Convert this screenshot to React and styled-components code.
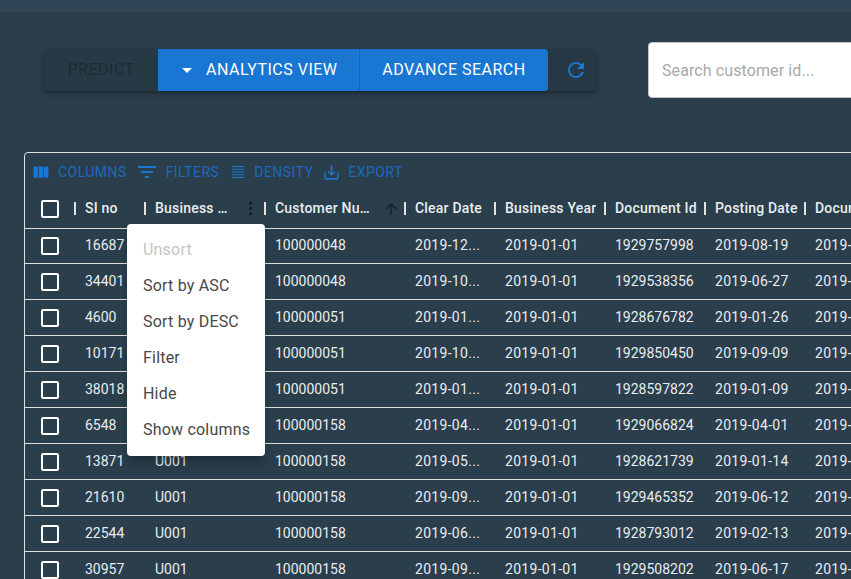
import React from 'react';
import styled, { createGlobalStyle } from 'styled-components';

const GlobalStyle = createGlobalStyle`
  html, body {
    margin: 0;
    height: 100%;
    overflow: hidden;
    background-color: #2a3e4c;
    font-family: Roboto, "Liberation Sans", Arial, sans-serif;
  }
`;

const Page = styled.div`
  width: 851px;
  height: 579px;
  overflow: hidden;
  background-color: #2a3e4c;
`;

const TopBar = styled.div`
  height: 12px;
  background-color: #2f4454;
`;

const Controls = styled.div`
  display: flex;
  align-items: center;
  margin-top: 30px;
  padding-left: 44px;
  height: 56px;
`;

const ButtonGroup = styled.div`
  display: flex;
  height: 42px;
  border-radius: 4px;
  background-color: #273945;
  box-shadow: 0 3px 3px -2px rgba(0, 0, 0, 0.2), 0 3px 4px rgba(0, 0, 0, 0.14), 0 1px 8px rgba(0, 0, 0, 0.12);
`;

const GroupButton = styled.button`
  display: flex;
  align-items: center;
  justify-content: ${(p) => (p.$center ? 'center' : 'flex-start')};
  width: ${(p) => p.$width}px;
  height: 42px;
  padding: 0;
  padding-left: ${(p) => p.$pad || 0}px;
  border: 0;
  border-right: ${(p) => (p.$divider ? '1px solid #1565c0' : '0')};
  border-radius: ${(p) => p.$radius || '0'};
  background-color: ${(p) => (p.$muted ? '#273945' : '#1976d2')};
  color: ${(p) => (p.$muted ? 'rgba(0, 0, 0, 0.26)' : '#fff')};
  font-family: Roboto, sans-serif;
  font-size: 16px;
  letter-spacing: 0.5px;
  line-height: 1;
  box-sizing: border-box;
`;

const CaretIcon = styled.svg`
  width: 24px;
  height: 24px;
  margin-right: 7px;
  fill: #fff;
`;

const RefreshIcon = styled.svg`
  width: 24px;
  height: 24px;
  fill: #1976d2;
`;

const SearchBox = styled.div`
  display: flex;
  align-items: center;
  flex: 1;
  margin-left: 52px;
  margin-right: -8px;
  height: 56px;
  padding-left: 13px;
  background-color: #fff;
  border: 1px solid #c4c4c4;
  border-radius: 4px;
  box-sizing: border-box;
  color: #a9a9a9;
  font-size: 16px;
  letter-spacing: 0.1px;
`;

const Grid = styled.div`
  width: 900px;
  margin-top: 54px;
  margin-left: 24px;
  position: relative;
  border: 1px solid #e0e0e0;
  border-radius: 4px;
  box-sizing: border-box;
`;

const Toolbar = styled.div`
  display: flex;
  align-items: center;
  height: 37px;
  padding: 1px 0 0 5px;
  box-sizing: border-box;
`;

const ToolbarItem = styled.div`
  display: flex;
  align-items: center;
  margin-right: ${(p) => p.$after}px;
  color: #1c68c0;
  font-size: 14px;
  letter-spacing: 0.45px;
`;

const ToolbarIcon = styled.svg`
  width: ${(p) => p.$size}px;
  height: ${(p) => p.$size}px;
  margin-right: ${(p) => p.$gap}px;
  fill: #1976d2;
`;

const Row = styled.div`
  display: grid;
  grid-template-columns: 50px 70px 120px 140px 90px 110px 100px 100px 120px;
  height: ${(p) => p.$height}px;
  border-bottom: 1px solid #e0e0e0;
  box-sizing: border-box;
`;

const Cell = styled.div`
  display: flex;
  align-items: center;
  padding: 0 0 ${(p) => p.$lift}px 10px;
  overflow: hidden;
  color: #e9edf0;
  font-size: 14px;
  letter-spacing: ${(p) => (p.$date ? '0.3px' : '0')};
  white-space: nowrap;
`;

const CheckCell = styled.div`
  display: flex;
  align-items: center;
  justify-content: center;
`;

const Checkbox = styled.span`
  width: 14px;
  height: 14px;
  border: 2px solid #fff;
  border-radius: 2px;
`;

const HeaderCell = styled.div`
  display: flex;
  align-items: center;
  min-width: 0;
  padding: 0 0 2px 10px;
  position: relative;
  color: #e9edf0;
  font-size: 14px;
  font-weight: 500;
  letter-spacing: 0.2px;
  white-space: nowrap;
  &::before {
    content: '';
    position: absolute;
    left: -1px;
    top: 12px;
    width: 2px;
    height: 13px;
    background-color: #e0e0e0;
  }
`;

const HeaderLabel = styled.span`
  flex: 0 1 auto;
  max-width: ${(p) => p.$max || 110}px;
  overflow: hidden;
  text-overflow: ellipsis;
`;

const MenuDots = styled.svg`
  position: absolute;
  right: 4px;
  top: 8px;
  width: 21px;
  height: 21px;
  fill: #15222c;
`;

const SortArrow = styled.svg`
  position: absolute;
  right: 5px;
  top: 10px;
  width: 18px;
  height: 18px;
  fill: #15222c;
`;

const Menu = styled.ul`
  position: absolute;
  left: 102px;
  top: 71px;
  width: 138px;
  height: 232px;
  margin: 0;
  padding: 7px 0 0;
  list-style: none;
  background-color: #fff;
  border-radius: 4px;
  box-sizing: border-box;
  box-shadow: 0 5px 5px -3px rgba(0, 0, 0, 0.2), 0 8px 10px 1px rgba(0, 0, 0, 0.14);
`;

const MenuItem = styled.li`
  display: flex;
  align-items: center;
  height: 36px;
  padding-left: 16px;
  color: ${(p) => (p.$disabled ? '#c4c4c4' : '#484848')};
  font-size: 16px;
  letter-spacing: 0.2px;
`;

const columns = [
  { label: 'SI no' },
  { label: 'Business Code', max: 75, menu: true },
  { label: 'Customer Number', max: 98, sort: true },
  { label: 'Clear Date' },
  { label: 'Business Year' },
  { label: 'Document Id' },
  { label: 'Posting Date' },
  { label: 'Document Create Date' },
];

const rows = [
  ['16687', 'U001', '100000048', '2019-12...', '2019-01-01', '1929757998', '2019-08-19'],
  ['34401', 'U001', '100000048', '2019-10...', '2019-01-01', '1929538356', '2019-06-27'],
  ['4600', 'U001', '100000051', '2019-01...', '2019-01-01', '1928676782', '2019-01-26'],
  ['10171', 'U001', '100000051', '2019-10...', '2019-01-01', '1929850450', '2019-09-09'],
  ['38018', 'U001', '100000051', '2019-01...', '2019-01-01', '1928597822', '2019-01-09'],
  ['6548', 'U001', '100000158', '2019-04...', '2019-01-01', '1929066824', '2019-04-01'],
  ['13871', 'U001', '100000158', '2019-05...', '2019-01-01', '1928621739', '2019-01-14'],
  ['21610', 'U001', '100000158', '2019-09...', '2019-01-01', '1929465352', '2019-06-12'],
  ['22544', 'U001', '100000158', '2019-06...', '2019-01-01', '1928793012', '2019-02-13'],
  ['30957', 'U001', '100000158', '2019-09...', '2019-01-01', '1929508202', '2019-06-17'],
];

const dateColumns = [3, 4, 6];

const menuItems = ['Unsort', 'Sort by ASC', 'Sort by DESC', 'Filter', 'Hide', 'Show columns'];

const toolbarItems = [
  { label: 'COLUMNS', size: 21, gap: 7, after: 8, box: '0 0 24 24', d: 'M10 18h5V5h-5v13zm-6 0h5V5H4v13zM16 5v13h5V5h-5z' },
  { label: 'FILTERS', size: 24, gap: 7, after: 13, box: '0 0 24 24', d: 'M10 18h4v-2h-4v2zM3 6v2h18V6H3zm3 7h12v-2H6v2z' },
  { label: 'DENSITY', size: 12, gap: 10, after: 9, box: '0 0 12 12', d: 'M0 0h12v1H0zM0 2.75h12v1H0zM0 5.5h12v1H0zM0 8.25h12v1H0zM0 11h12v1H0z' },
  { label: 'EXPORT', size: 19, gap: 7, after: 0, box: '0 0 24 24', d: 'M19 12v7H5v-7H3v7c0 1.1.9 2 2 2h14c1.1 0 2-.9 2-2v-7h-2zm-6 .67l2.59-2.58L17 11.5l-5 5-5-5 1.41-1.41L11 12.67V3h2z' },
];

const App = () => {
  return (
    <Page>
      <GlobalStyle />
      <TopBar />
      <Controls>
        <ButtonGroup>
          <GroupButton $muted $center $width={114} $radius="4px 0 0 4px">PREDICT</GroupButton>
          <GroupButton $width={202} $pad={17} $divider>
            <CaretIcon viewBox="0 0 24 24"><path d="M7 10l5 5 5-5z" /></CaretIcon>
            ANALYTICS VIEW
          </GroupButton>
          <GroupButton $center $width={188} $radius="0 4px 4px 0">ADVANCE SEARCH</GroupButton>
          <GroupButton $muted $center $width={48} $pad={8} $radius="0 4px 4px 0">
            <RefreshIcon viewBox="0 0 24 24">
              <path d="M17.65 6.35C16.2 4.9 14.21 4 12 4c-4.42 0-7.99 3.58-7.99 8s3.57 8 7.99 8c3.73 0 6.84-2.55 7.73-6h-2.08c-.82 2.33-3.04 4-5.65 4-3.31 0-6-2.69-6-6s2.69-6 6-6c1.66 0 3.14.69 4.22 1.78L13 11h7V4l-2.35 2.35z" />
            </RefreshIcon>
          </GroupButton>
        </ButtonGroup>
        <SearchBox>Search customer id...</SearchBox>
      </Controls>
      <Grid>
        <Toolbar>
          {toolbarItems.map((item) => (
            <ToolbarItem key={item.label} $after={item.after}>
              <ToolbarIcon viewBox={item.box} $size={item.size} $gap={item.gap}><path d={item.d} /></ToolbarIcon>
              {item.label}
            </ToolbarItem>
          ))}
        </Toolbar>
        <Row $height={39}>
          <CheckCell><Checkbox /></CheckCell>
          {columns.map((col) => (
            <HeaderCell key={col.label}>
              <HeaderLabel $max={col.max}>{col.label}</HeaderLabel>
              {col.menu && (
                <MenuDots viewBox="0 0 24 24">
                  <path d="M12 8c1.1 0 2-.9 2-2s-.9-2-2-2-2 .9-2 2 .9 2 2 2zm0 2c-1.1 0-2 .9-2 2s.9 2 2 2 2-.9 2-2-.9-2-2-2zm0 6c-1.1 0-2 .9-2 2s.9 2 2 2 2-.9 2-2-.9-2-2-2z" />
                </MenuDots>
              )}
              {col.sort && (
                <SortArrow viewBox="0 0 24 24">
                  <path d="M4 12l1.41 1.41L11 7.83V20h2V7.83l5.58 5.59L20 12l-8-8-8 8z" />
                </SortArrow>
              )}
            </HeaderCell>
          ))}
        </Row>
        {rows.map((row, r) => (
          <Row key={row[0]} $height={r === 0 ? 35 : 36}>
            <CheckCell><Checkbox /></CheckCell>
            {row.map((value, i) => (
              <Cell key={i} $date={dateColumns.includes(i)} $lift={r === 0 ? 2 : 1}>{value}</Cell>
            ))}
            <Cell $date $lift={r === 0 ? 2 : 1}>2019-08-19</Cell>
          </Row>
        ))}
        <Menu>
          {menuItems.map((item, i) => (
            <MenuItem key={item} $disabled={i === 0}>{item}</MenuItem>
          ))}
        </Menu>
      </Grid>
    </Page>
  );
};

export default App;
